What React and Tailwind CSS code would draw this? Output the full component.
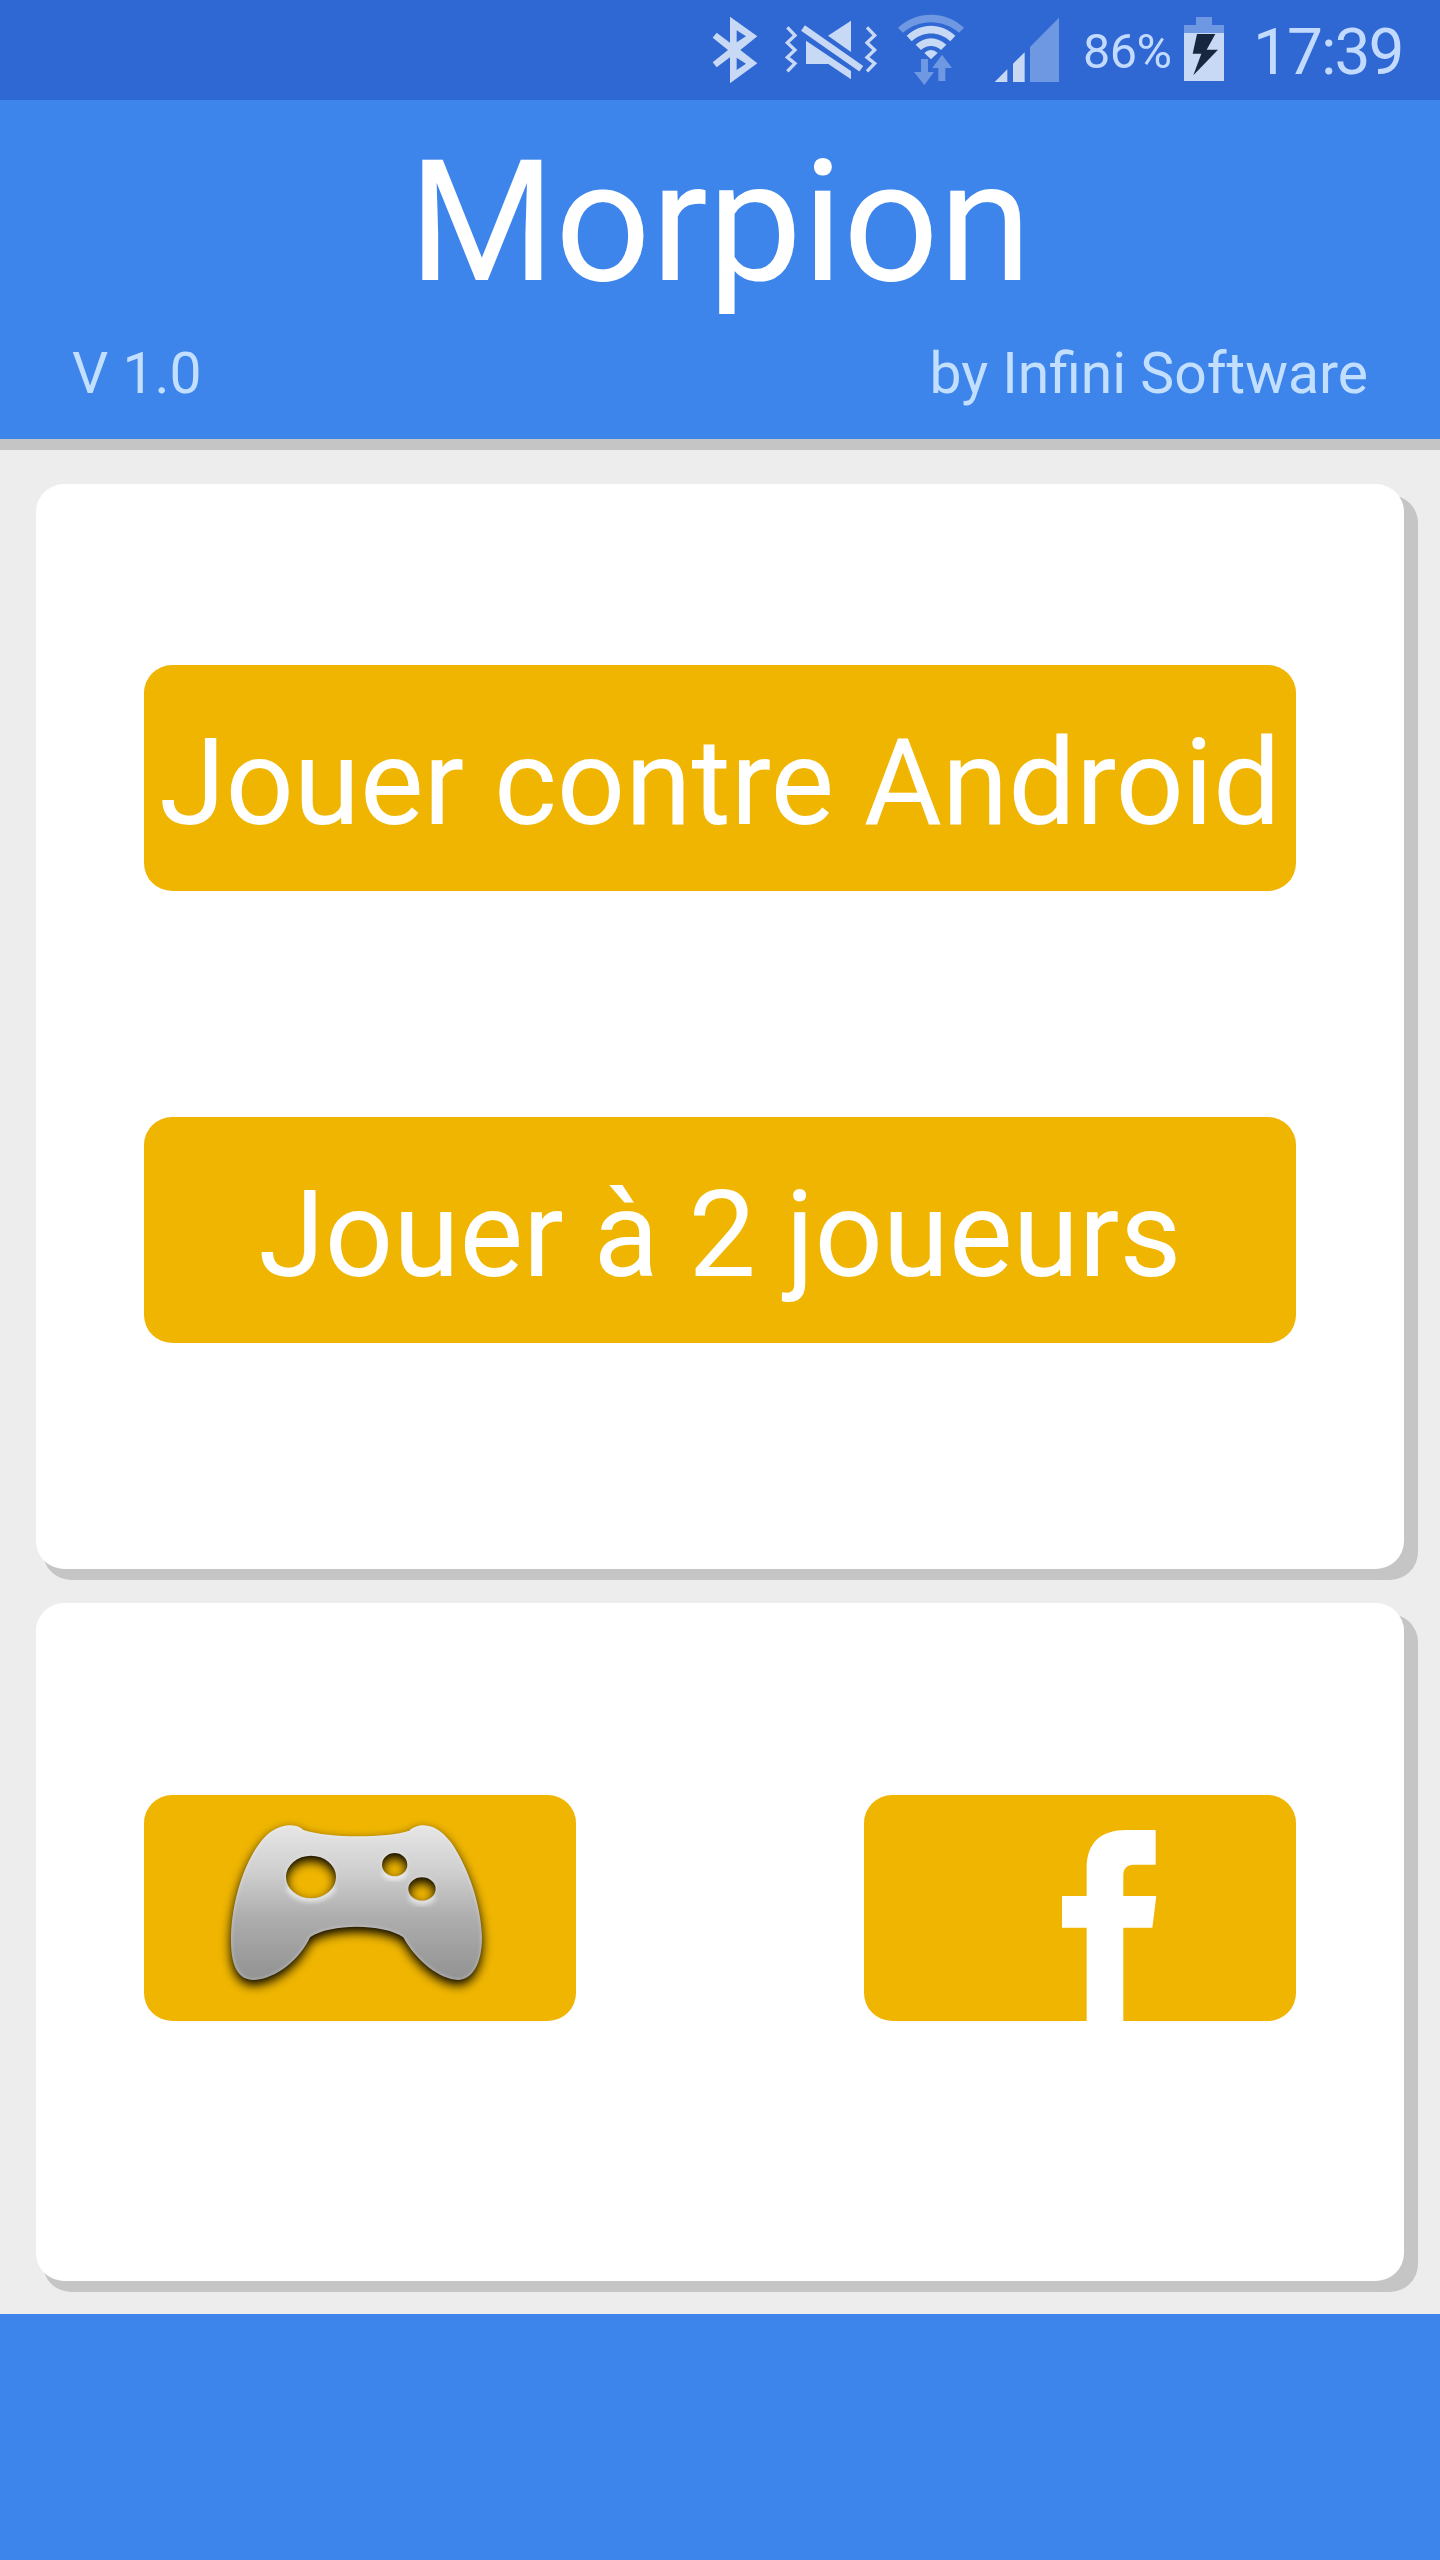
const ICON = "#c8d9f6";
const DIM = "#6f98e2";

function StatusIcon({ x, w, label, className, children }) {
  return (
    <svg
      aria-label={label}
      viewBox={`${x * 3} 0 ${w * 3} 300`}
      width={w}
      height={100}
      className={className}
    >
      {children}
    </svg>
  );
}

function StatusBar() {
  return (
    <div className="flex h-[100px] w-full items-start overflow-hidden whitespace-nowrap bg-[#2f67d3] pl-[712px] text-[#c3daff]">
      <StatusIcon x={12} w={48} label="Bluetooth" className="shrink-0">
        <path
          fill={ICON}
          fillRule="evenodd"
          d="M90 50 172 109 121 150 172 190 90 250V172L50 202 38 187 84 150 38 113 50 98 90 128ZM110 91V127L138 109ZM110 173V210L138 191Z"
        />
      </StatusIcon>
      <StatusIcon x={84} w={94} label="Muet" className="ml-6 shrink-0">
        <g fill="none" stroke={ICON} strokeWidth="10">
          <path d="M262 82 285 106 262 128 285 150 262 172 285 190 262 214" />
          <path d="M501 82 524 106 501 128 524 150 501 172 524 190 501 214" />
        </g>
        <path fill={ICON} d="M453 62V156L384 107ZM318 122 453 213V238L385 192H318Z" />
        <path fill="none" stroke={ICON} strokeWidth="20" d="M309 84 484 206" />
      </StatusIcon>
      <StatusIcon x={197} w={69} label="Wi-Fi" className="ml-[19px] shrink-0">
        <path fill={DIM} d="M594 83C650 31 736 31 792 83L777 98C730 56 656 56 609 98Z" />
        <path fill={ICON} d="M620 107C662 67 724 67 766 107L751 124C717 93 669 93 635 124Z" />
        <path fill={ICON} d="M647 134C674 108 712 108 739 134L723 150C706 134 680 134 663 150Z" />
        <path fill={ICON} d="M673 159C686 147 700 147 713 159L693 178Z" />
        <path
          fill={DIM}
          d="M663 177H684V216H702L673 255 642 216H663ZM726 164 756 204H736V243H715V204H697Z"
        />
      </StatusIcon>
      <StatusIcon x={294} w={66} label="Signal" className="ml-7 shrink-0">
        <path fill={ICON} d="M884 246 922 208V246ZM939 191 974 157V246H939Z" />
        <path fill={DIM} d="M990 141 1077 53V246H990Z" />
      </StatusIcon>
      <span className="ml-[23px] mt-[22px] w-[101px] text-[48.5px] leading-[60px] tracking-[-0.5px]">
        86%
      </span>
      <svg aria-label="Batterie" viewBox="372 0 120 300" width={40} height={100} className="shrink-0">
        <path fill={DIM} d="M408 51H456V75H492V99H372V75H408Z" />
        <path fill={ICON} d="M372 99H492V243H372Z" />
        <path fill="#17273f" d="M411 102H466L440 149H474L400 226 424 161H398Z" />
      </svg>
      <span className="ml-[29px] mt-[13px] text-[64px] leading-[80px] tracking-[-2px]">17:39</span>
    </div>
  );
}

function Header() {
  return (
    <header className="flex h-[350px] flex-col border-b-[11px] border-[#c5c5c5] bg-[#3d85eb] pt-[13px]">
      <h1 className="text-center text-[168px] leading-[220px] text-white">Morpion</h1>
      <div className="mt-px flex justify-between px-[72px] text-[57px] leading-[80px] text-[#c3dfff]">
        <span>V 1.0</span>
        <span>by Infini Software</span>
      </div>
    </header>
  );
}

function PlayButton({ children }) {
  return (
    <button className="flex h-[226px] w-full items-center justify-center whitespace-nowrap rounded-[28px] bg-[#efb500] pt-[9px] text-[120px] leading-none text-white">
      {children}
    </button>
  );
}

const PAD =
  "M483 136C440 136 410 160 385 195C335 265 303 380 303 480C303 560 325 600 372 600C440 596 508 540 540 472C600 430 760 430 820 472C860 545 930 598 985 600C1035 595 1056 540 1056 470C1052 370 1015 265 965 190C930 145 905 136 875 136C860 137 845 145 838 152C770 174 600 176 520 150C510 141 500 137 483 136Z" +
  "M468 291A75 64 0 1 0 618 291A75 64 0 1 0 468 291Z" +
  "M756 254A38 35 0 1 0 832 254A38 35 0 1 0 756 254Z" +
  "M835 327A41 35 0 1 0 917 327A41 35 0 1 0 835 327Z";

function GamepadIcon() {
  return (
    <svg aria-label="Manette" viewBox="42 45 1296 678" className="h-full w-full">
      <defs>
        <linearGradient id="metal" gradientUnits="userSpaceOnUse" x1="0" y1="136" x2="0" y2="600">
          <stop offset="0" stopColor="#e6e6e6" />
          <stop offset="0.3" stopColor="#cfcfcf" />
          <stop offset="0.6" stopColor="#adadad" />
          <stop offset="1" stopColor="#929292" />
        </linearGradient>
        <filter id="shade" x="-20%" y="-20%" width="140%" height="150%">
          <feGaussianBlur stdDeviation="16" />
        </filter>
        <filter id="soft" x="-20%" y="-20%" width="140%" height="140%">
          <feGaussianBlur stdDeviation="4" />
        </filter>
        <filter id="glow" x="-30%" y="-60%" width="160%" height="220%">
          <feGaussianBlur stdDeviation="8" />
        </filter>
        <clipPath id="pad">
          <path d={PAD} clipRule="evenodd" />
        </clipPath>
      </defs>
      <path d={PAD} fillRule="evenodd" transform="translate(0 15)" filter="url(#shade)" />
      <path d={PAD} fillRule="evenodd" fill="url(#metal)" />
      <g clipPath="url(#pad)" fill="none" stroke="#fff">
        <path d={PAD} strokeWidth="7" opacity="0.3" filter="url(#soft)" />
        <g strokeWidth="18" opacity="0.6">
          <path d="M474 322C502 370 584 370 612 322" filter="url(#glow)" />
          <path d="M762 275C775 300 813 300 826 275" filter="url(#glow)" />
          <path d="M841 348C854 374 898 374 911 348" filter="url(#glow)" />
        </g>
      </g>
    </svg>
  );
}

function FacebookIcon() {
  return (
    <svg aria-label="Facebook" viewBox="42 45 1296 678" className="h-full w-full">
      <path
        fill="#fff"
        d="M710 723V443H636V348H710V265C710 188 752 150 830 150H917V254H850C832 254 820 266 820 285V348H919L907 443H820V723Z"
      />
    </svg>
  );
}

function IconButton({ children }) {
  return (
    <button className="h-[226px] w-[432px] overflow-hidden rounded-[28px] bg-[#efb500]">
      {children}
    </button>
  );
}

export default function App() {
  return (
    <div className="flex h-[2560px] w-[1440px] flex-col overflow-hidden bg-[#ededed] font-[Roboto,sans-serif]">
      <StatusBar />
      <Header />
      <main className="flex flex-col gap-[34px] px-9 pb-[33px] pt-[34px]">
        <section className="flex h-[1085px] flex-col gap-[226px] rounded-[28px] bg-white px-[108px] pt-[181px] shadow-[7px_11px_0_#c5c5c5,14px_11px_0_#c5c5c5]">
          <PlayButton>Jouer contre Android</PlayButton>
          <PlayButton>Jouer à 2 joueurs</PlayButton>
        </section>
        <section className="flex h-[678px] justify-between rounded-[28px] bg-white px-[108px] pt-48 shadow-[7px_11px_0_#c5c5c5,14px_11px_0_#c5c5c5]">
          <IconButton>
            <GamepadIcon />
          </IconButton>
          <IconButton>
            <FacebookIcon />
          </IconButton>
        </section>
      </main>
      <footer className="flex-1 bg-[#3d85eb]" />
    </div>
  );
}
